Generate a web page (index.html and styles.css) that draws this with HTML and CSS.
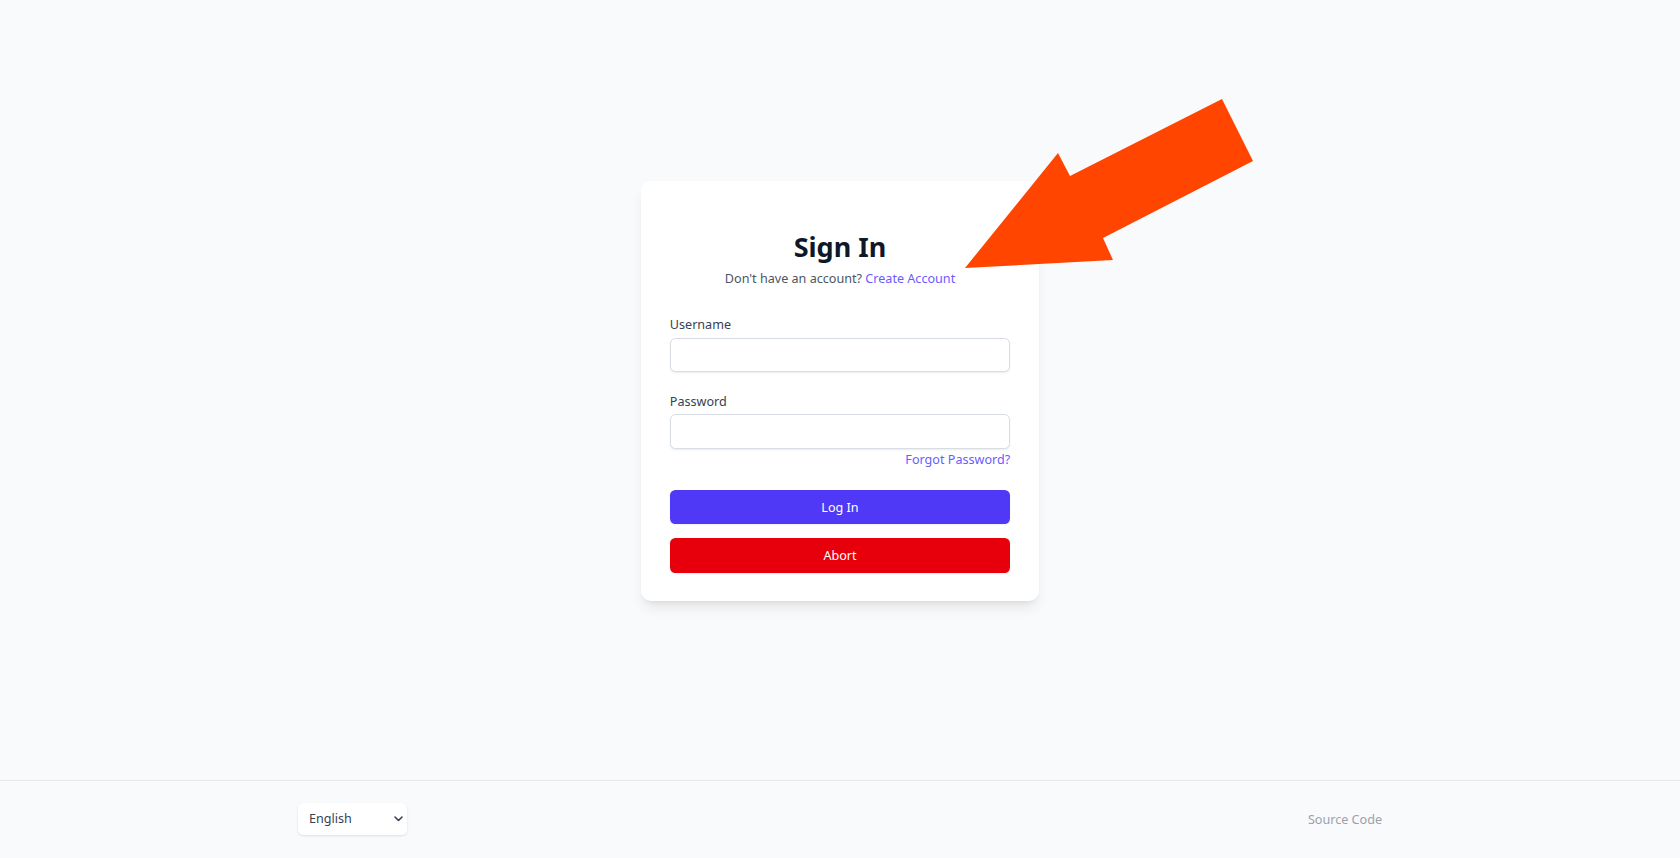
FILE: index.html
```html
<!DOCTYPE html>
<html lang="en">
<head>
<meta charset="utf-8">
<title>Sign In</title>
<link rel="stylesheet" href="styles.css">
</head>
<body>
<main class="main">
  <div class="card">
    <h1 class="title">Sign In</h1>
    <p class="subtitle">Don't have an account? <a class="link" href="#">Create Account</a></p>
    <form class="form">
      <div class="field">
        <label class="label" for="username">Username</label>
        <input class="input" id="username" type="text">
      </div>
      <div class="field field-gap">
        <label class="label" for="password">Password</label>
        <input class="input" id="password" type="password">
      </div>
      <div class="forgot"><a class="link" href="#">Forgot Password?</a></div>
      <button class="btn btn-login" type="button">Log In</button>
      <button class="btn btn-abort" type="button">Abort</button>
    </form>
  </div>
</main>
<footer class="footer">
  <div class="lang">
    <span>English</span>
    <svg class="chev" width="9" height="6" viewBox="0 0 9 6"><path d="M1 1l3.5 3.5L8 1" fill="none" stroke="#364153" stroke-width="1.6" stroke-linecap="round" stroke-linejoin="round"/></svg>
  </div>
  <a class="source" href="#">Source Code</a>
</footer>
<svg class="arrow" width="1680" height="858" viewBox="0 0 1680 858">
  <polygon points="965,268 1058,153 1070,176 1222,99 1253,161 1103,238 1113,260" fill="#ff4500"/>
</svg>
</body>
</html>
```
FILE: styles.css
```css
html, body {
  margin: 0;
  padding: 0;
}
body {
  height: 858px;
  display: flex;
  flex-direction: column;
  background: #f9fafb;
  font-family: "Noto Sans", "Open Sans", sans-serif;
  color: #364153;
  overflow: hidden;
}
.main {
  flex: 1;
  display: flex;
  align-items: center;
  justify-content: center;
}
.card {
  width: 398px;
  box-sizing: border-box;
  margin-top: 2px;
  padding: 28.8px;
  background: #ffffff;
  border-radius: 10px;
  box-shadow: 0 9px 14px -3px rgba(0, 0, 0, 0.09), 0 4px 6px -4px rgba(0, 0, 0, 0.09);
}
.title {
  margin: 21.5px 0 0;
  font-size: 27px;
  line-height: 32.4px;
  font-weight: 700;
  text-align: center;
  color: #101828;
}
.subtitle {
  margin: 6.4px 0 0;
  font-size: 12.6px;
  line-height: 18px;
  text-align: center;
  color: #4a5565;
}
.link {
  color: #6a5cff;
  text-decoration: none;
}
.form {
  margin-top: 28.3px;
}
.field-gap {
  margin-top: 21px;
}
.label {
  display: block;
  font-size: 12.6px;
  line-height: 18px;
  font-weight: 400;
  color: #364153;
}
.input {
  display: block;
  width: 100%;
  height: 34.2px;
  margin: 3.6px 0 0;
  box-sizing: border-box;
  border: 1px solid #d8dce3;
  border-radius: 5.4px;
  background: #ffffff;
  box-shadow: 0 1px 2px rgba(0, 0, 0, 0.08);
  font-family: inherit;
  font-size: 12.6px;
  outline: none;
}
.forgot {
  margin-top: 2px;
  text-align: right;
  font-size: 12.6px;
  line-height: 18px;
}
.btn {
  display: block;
  width: 100%;
  height: 34.2px;
  border: none;
  border-radius: 5.4px;
  font-family: inherit;
  font-size: 12.6px;
  color: #ffffff;
  box-shadow: 0 1px 2px rgba(0, 0, 0, 0.06);
  cursor: pointer;
}
.btn-login {
  margin-top: 21.6px;
  background: #4f39f6;
}
.btn-abort {
  margin-top: 14px;
  background: #e7000b;
}
.footer {
  height: 77px;
  border-top: 1px solid #e5e7eb;
  display: flex;
  align-items: center;
  justify-content: space-between;
  padding: 0 298px 0 298px;
}
.lang {
  width: 109px;
  height: 32px;
  box-sizing: border-box;
  margin-top: -2px;
  padding: 0 4px 0 11px;
  display: flex;
  align-items: center;
  justify-content: space-between;
  background: #ffffff;
  border-radius: 5.4px;
  box-shadow: 0 1px 3px rgba(0, 0, 0, 0.08), 0 1px 2px rgba(0, 0, 0, 0.04);
  font-size: 12.6px;
  color: #364153;
}
.chev {
  margin-right: 0;
}
.source {
  font-size: 12.6px;
  color: #99a1af;
  text-decoration: none;
}
.arrow {
  position: absolute;
  left: 0;
  top: 0;
  pointer-events: none;
}
```
